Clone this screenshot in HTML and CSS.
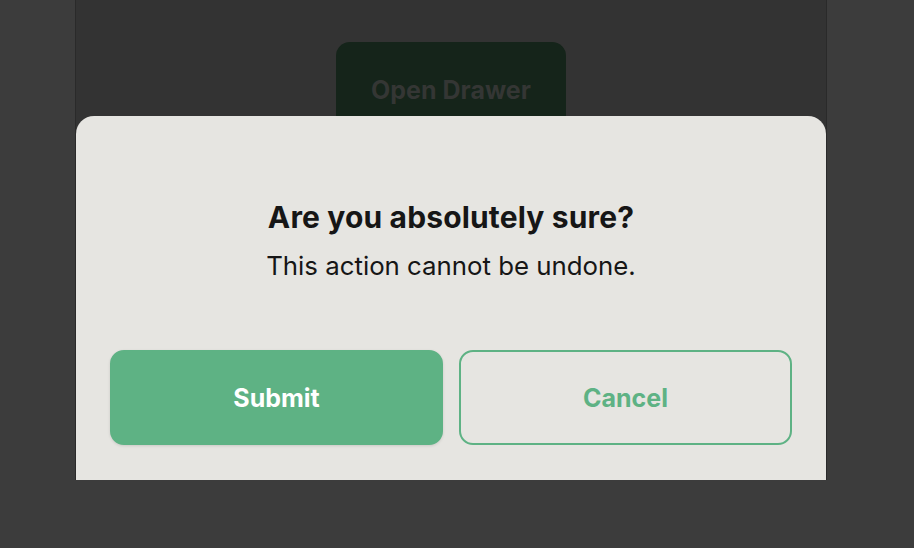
FILE: index.html
```html
<!DOCTYPE html>
<html>
<head>
<meta charset="utf-8">
<link rel="stylesheet" href="styles.css">
</head>
<body>
<div class="frame">
  <div class="trigger-row">
    <button class="open-btn">Open Drawer</button>
  </div>
  <div class="drawer">
    <div class="drawer-header">
      <h2 class="title">Are you absolutely sure?</h2>
      <p class="desc">This action cannot be undone.</p>
    </div>
    <div class="actions">
      <button class="btn btn-primary">Submit</button>
      <button class="btn btn-outline">Cancel</button>
    </div>
  </div>
</div>
</body>
</html>
```

FILE: styles.css
```css
html, body {
  margin: 0;
  padding: 0;
  height: 100%;
}
body {
  background: #3c3c3c;
  font-family: Inter, "Noto Sans", sans-serif;
}
.frame {
  width: 750px;
  height: 480px;
  margin: 0 0 0 75px;
  background: #333333;
  border-left: 1px solid #2a2a2a;
  border-right: 1px solid #2a2a2a;
  display: flex;
  flex-direction: column;
  overflow: hidden;
}
.trigger-row {
  display: flex;
  justify-content: center;
  padding-top: 42px;
  height: 74px;
}
.open-btn {
  width: 230px;
  height: 95px;
  border: none;
  border-radius: 14px;
  background: #15241a;
  color: #343634;
  font-family: inherit;
  font-weight: 700;
  font-size: 25px;
  padding: 0;
  flex-shrink: 0;
}
.drawer {
  flex: 1;
  background: #e6e5e1;
  border-radius: 18px 18px 0 0;
  display: flex;
  flex-direction: column;
  padding: 83px 34px 35px;
  position: relative;
  z-index: 1;
}
.drawer-header {
  text-align: center;
}
.title {
  margin: 0;
  font-size: 30px;
  line-height: 36px;
  font-weight: 700;
  letter-spacing: 0.15px;
  color: #161616;
}
.desc {
  margin: 15px 0 0;
  font-size: 25.8px;
  line-height: 32px;
  color: #161616;
}
.actions {
  margin-top: auto;
  display: flex;
  gap: 16px;
}
.btn {
  flex: 1 1 0;
  min-width: 0;
  padding: 0;
  height: 95px;
  box-sizing: border-box;
  border-radius: 14px;
  border: 2px solid transparent;
  font-family: inherit;
  font-weight: 700;
  font-size: 25px;
}
.btn-primary {
  background: #5eb284;
  color: #ffffff;
  border-color: #5eb284;
  box-shadow: 0 1px 3px rgba(0,0,0,0.12);
}
.btn-outline {
  background: transparent;
  color: #5eb284;
  border-color: #5eb284;
}
```
